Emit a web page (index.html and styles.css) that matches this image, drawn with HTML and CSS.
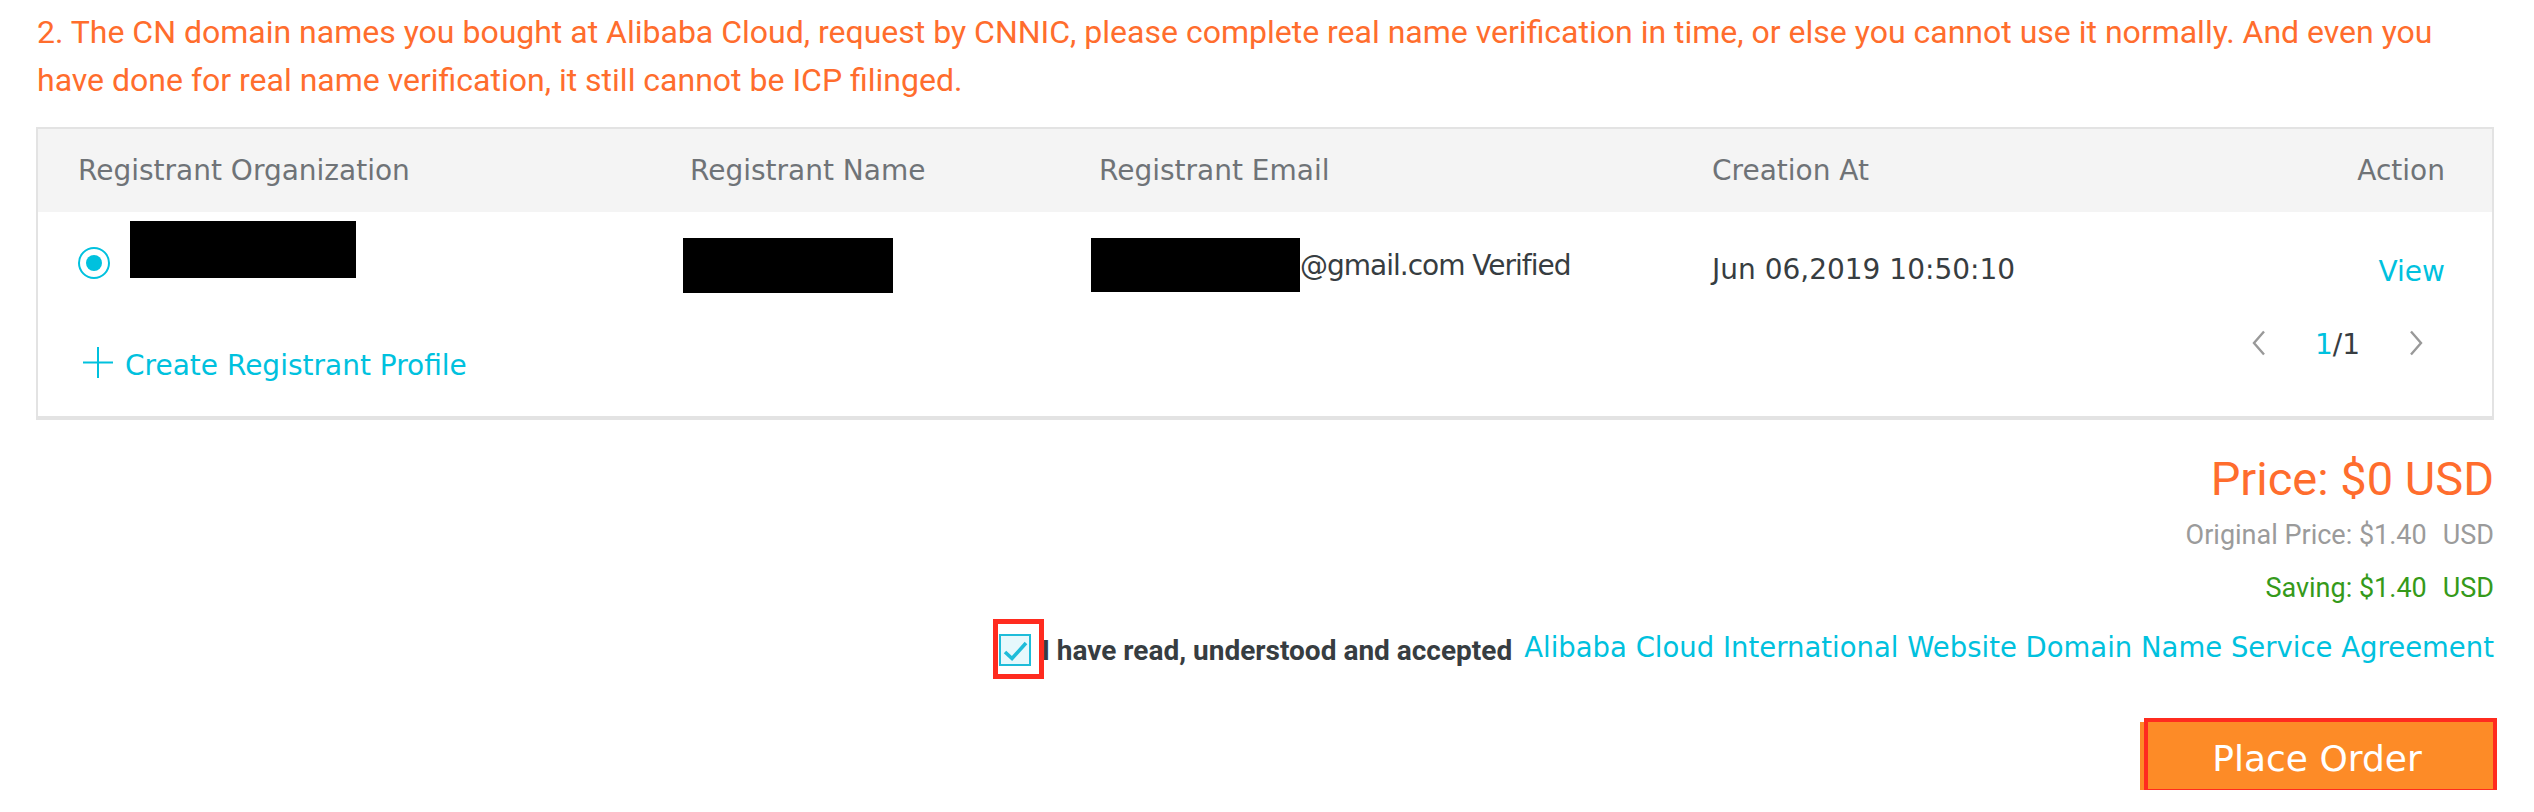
FILE: index.html
```html
<!DOCTYPE html>
<html lang="en">
<head>
<meta charset="utf-8">
<title>Registrant Profile</title>
<link rel="stylesheet" href="styles.css">
</head>
<body>
<div class="page">
  <p class="notice">2. The CN domain names you bought at Alibaba Cloud, request by CNNIC, please complete real name verification in time, or else you cannot use it normally. And even you have done for real name verification, it still cannot be ICP filinged.</p>

  <div class="table">
    <div class="grid thead">
      <div class="th">Registrant Organization</div>
      <div class="th">Registrant Name</div>
      <div class="th">Registrant Email</div>
      <div class="th">Creation At</div>
      <div class="th th-action">Action</div>
    </div>
    <div class="grid trow">
      <div class="td td-org">
        <span class="radio"><span class="radio-dot"></span></span>
        <span class="redact redact-org"></span>
      </div>
      <div class="td td-name"><span class="redact redact-name"></span></div>
      <div class="td td-email"><span class="redact redact-email"></span><span class="email-text">@gmail.com Verified</span></div>
      <div class="td td-date">Jun 06,2019 10:50:10</div>
      <div class="td td-action"><a class="link" href="#">View</a></div>
    </div>
    <div class="tfoot">
      <a class="create" href="#">
        <svg class="plus" width="30" height="31" viewBox="0 0 30 31"><path d="M15 0V31M0 15.5H30" stroke="#00c1de" stroke-width="2" fill="none"/></svg>
        <span>Create Registrant Profile</span>
      </a>
      <div class="pager">
        <svg class="chev" width="13" height="26" viewBox="0 0 13 26"><path d="M12 1.5L2 13L12 24.5" stroke="#999" stroke-width="2.4" fill="none"/></svg>
        <span class="page-num"><span class="cur">1</span>/1</span>
        <svg class="chev" width="13" height="26" viewBox="0 0 13 26"><path d="M1 1.5L11 13L1 24.5" stroke="#999" stroke-width="2.4" fill="none"/></svg>
      </div>
    </div>
  </div>

  <div class="summary">
    <div class="price">Price: $0 USD</div>
    <div class="orig">Original Price: $1.40<span class="unit">USD</span></div>
    <div class="saving">Saving: $1.40<span class="unit">USD</span></div>
    <div class="agree">
      <span class="check-wrap">
        <span class="checkbox"><svg width="28" height="28" viewBox="0 0 28 28"><path d="M4 16L11 22.5L25 7" stroke="#1ebcd9" stroke-width="3.6" fill="none"/></svg></span>
        <span class="annot annot-check"></span>
      </span>
      <span class="agree-text">I have read, understood and accepted</span>
      <a class="link agree-link" href="#">Alibaba Cloud International Website Domain Name Service Agreement</a>
    </div>
    <div class="actions">
      <button class="order" type="button">Place Order<span class="annot annot-btn"></span></button>
    </div>
  </div>
</div>
</body>
</html>
```

FILE: styles.css
```css
html, body {
  margin: 0;
  background: #ffffff;
}

body {
  font-family: "DejaVu Sans", sans-serif;
  overflow: hidden;
}

.page {
  padding: 0 40px 0 36px;
}

.notice {
  margin: 0;
  padding: 8px 0 0 1px;
  font-family: Roboto, "Liberation Sans", sans-serif;
  font-size: 32px;
  line-height: 48px;
  color: #ff6d2d;
}

.table {
  margin-top: 23px;
  border: 2px solid #e3e3e3;
  border-bottom-width: 4px;
}

.grid {
  display: grid;
  grid-template-columns: 612px 409px 613px 1fr auto;
}

.thead {
  background: #f4f4f4;
  height: 83px;
}

.th {
  padding-left: 40px;
  font-size: 28px;
  line-height: 83px;
  color: #6f7377;
  white-space: nowrap;
}

.trow {
  height: 108px;
  align-items: start;
}

.td {
  padding-left: 40px;
  font-size: 28px;
  line-height: 40px;
  color: #373d41;
  white-space: nowrap;
}

.th-action,
.td-action {
  padding-left: 0;
  padding-right: 47px;
  text-align: right;
}

.td-org {
  display: flex;
  align-items: flex-start;
  gap: 20px;
}

.radio {
  margin-top: 35px;
  width: 32px;
  height: 32px;
  box-sizing: border-box;
  border: 2px solid #00c1de;
  border-radius: 50%;
  display: flex;
  align-items: center;
  justify-content: center;
  flex: none;
}

.radio-dot {
  width: 16px;
  height: 16px;
  border-radius: 50%;
  background: #00c1de;
}

.redact {
  display: block;
  background: #000000;
  flex: none;
}

.redact-org {
  width: 226px;
  height: 57px;
  margin-top: 9px;
}

.td-name {
  padding-top: 26px;
}

.redact-name {
  width: 210px;
  height: 55px;
  margin-left: -7px;
}

.td-email {
  display: flex;
  align-items: flex-start;
}

.redact-email {
  width: 209px;
  height: 54px;
  margin-top: 26px;
  margin-left: -8px;
}

.email-text {
  margin-top: 34px;
  letter-spacing: -1px;
}

.td-date {
  padding-top: 38px;
}

.td-action {
  padding-top: 40px;
}

.link {
  color: #00c1de;
  text-decoration: none;
}

.tfoot {
  height: 96px;
  display: flex;
  justify-content: space-between;
  align-items: flex-start;
  padding: 0 69px 0 45px;
}

.create {
  margin-top: 26px;
  display: flex;
  align-items: flex-start;
  gap: 12px;
  color: #00c1de;
  text-decoration: none;
  font-size: 28px;
  line-height: 40px;
}

.plus {
  margin-top: 1px;
  flex: none;
}

.pager {
  margin-top: 10px;
  display: flex;
  align-items: flex-start;
  gap: 50px;
}

.page-num {
  margin-top: 2px;
  font-size: 28px;
  line-height: 26px;
  color: #373d41;
}

.cur {
  color: #00c1de;
}

.summary {
  display: flex;
  flex-direction: column;
  align-items: flex-end;
}

.price {
  margin-top: 31px;
  font-family: Roboto, "Liberation Sans", sans-serif;
  font-size: 47px;
  line-height: 56px;
  color: #ff6d2d;
}

.orig,
.saving {
  font-family: Roboto, "Liberation Sans", sans-serif;
  font-size: 27px;
  line-height: 40px;
}

.orig {
  margin-top: 8px;
  color: #9b9b9b;
}

.saving {
  margin-top: 13px;
  color: #359a1a;
}

.unit {
  margin-left: 16px;
}

.agree {
  margin-top: 19px;
  display: flex;
  align-items: flex-start;
}

.check-wrap {
  position: relative;
  margin-top: 7px;
  margin-right: 11px;
}

.checkbox {
  display: flex;
  align-items: center;
  justify-content: center;
  width: 32px;
  height: 32px;
  box-sizing: border-box;
  border: 2px solid #1ebcd9;
  background: #e6f8fc;
}

.annot {
  position: absolute;
  box-sizing: border-box;
  border: 5px solid #ff2b1f;
  pointer-events: none;
}

.annot-check {
  left: -6px;
  top: -15px;
  width: 51px;
  height: 60px;
}

.agree-text {
  margin-top: 4px;
  margin-right: 12px;
  font-family: Roboto, "Liberation Sans", sans-serif;
  font-weight: 700;
  font-size: 28px;
  line-height: 40px;
  color: #373d41;
  white-space: nowrap;
}

.agree-link {
  font-size: 27.5px;
  line-height: 40px;
  white-space: nowrap;
}

.actions {
  margin-top: 51px;
}

.order {
  position: relative;
  display: block;
  width: 354px;
  height: 68px;
  margin: 0;
  padding: 6px 0 0;
  box-sizing: border-box;
  border: none;
  background: #fd8b27;
  color: #ffffff;
  font-family: "DejaVu Sans", sans-serif;
  font-size: 36px;
  line-height: 62px;
  text-align: center;
}

.annot-btn {
  left: 4px;
  top: -4px;
  width: 353px;
  height: 75px;
  border-width: 4px;
}
```
